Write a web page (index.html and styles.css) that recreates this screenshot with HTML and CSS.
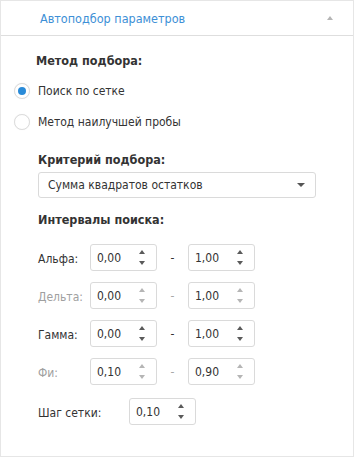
FILE: index.html
```html
<!DOCTYPE html>
<html lang="ru">
<head>
<meta charset="utf-8">
<link rel="stylesheet" href="styles.css">
</head>
<body>
<div class="panel">
  <div class="header">
    <span class="title">Автоподбор параметров</span>
    <span class="caret"></span>
  </div>
  <div class="content">
    <div class="heading h-method">Метод подбора:</div>
    <div class="radio r1 checked"><span class="circle"></span><span>Поиск по сетке</span></div>
    <div class="radio r2"><span class="circle"></span><span>Метод наилучшей пробы</span></div>

    <div class="heading h-crit">Критерий подбора:</div>
    <div class="select"><span>Сумма квадратов остатков</span><span class="sel-arrow"></span></div>

    <div class="heading h-int">Интервалы поиска:</div>

    <div class="row first">
      <span class="lbl">Альфа:</span>
      <div class="spin"><span class="val">0,00</span><span class="arrows"><i class="up"></i><i class="down"></i></span></div>
      <span class="dash">-</span>
      <div class="spin"><span class="val">1,00</span><span class="arrows"><i class="up"></i><i class="down"></i></span></div>
    </div>
    <div class="row disabled">
      <span class="lbl">Дельта:</span>
      <div class="spin"><span class="val">0,00</span><span class="arrows"><i class="up"></i><i class="down"></i></span></div>
      <span class="dash">-</span>
      <div class="spin"><span class="val">1,00</span><span class="arrows"><i class="up"></i><i class="down"></i></span></div>
    </div>
    <div class="row">
      <span class="lbl">Гамма:</span>
      <div class="spin"><span class="val">0,00</span><span class="arrows"><i class="up"></i><i class="down"></i></span></div>
      <span class="dash">-</span>
      <div class="spin"><span class="val">1,00</span><span class="arrows"><i class="up"></i><i class="down"></i></span></div>
    </div>
    <div class="row disabled">
      <span class="lbl">Фи:</span>
      <div class="spin"><span class="val">0,10</span><span class="arrows"><i class="up"></i><i class="down"></i></span></div>
      <span class="dash">-</span>
      <div class="spin"><span class="val">0,90</span><span class="arrows"><i class="up"></i><i class="down"></i></span></div>
    </div>
    <div class="row step">
      <span class="lbl step-lbl">Шаг сетки:</span>
      <div class="spin"><span class="val">0,10</span><span class="arrows"><i class="up"></i><i class="down"></i></span></div>
    </div>
  </div>
</div>
</body>
</html>
```

FILE: styles.css
```css
* { box-sizing: border-box; }
html, body { margin: 0; padding: 0; background: #fff; }
body {
  font-family: "DejaVu Sans Condensed", "DejaVu Sans", sans-serif;
  font-size: 12px;
  color: #333;
}
.panel {
  width: 354px;
  height: 457px;
  border: 1px solid #e6e6e6;
  display: flex;
  flex-direction: column;
}
.header {
  height: 35px;
  border-bottom: 1px solid #dedede;
  display: flex;
  align-items: center;
  padding-left: 39px;
  padding-right: 20px;
  flex-shrink: 0;
}
.title {
  color: #3d8fd6;
  font-size: 12.5px;
  flex: 1;
}
.caret {
  width: 0; height: 0;
  border-left: 3px solid transparent;
  border-right: 3px solid transparent;
  border-bottom: 4px solid #b5b5b5;
}
.content {
  display: flex;
  flex-direction: column;
  padding-left: 36px;
}
.heading {
  font-weight: bold;
  font-size: 12.5px;
  line-height: 16px;
  height: 16px;
}
.h-method { margin-top: 17px; margin-left: -1px; }
.radio {
  display: flex;
  align-items: center;
  height: 16px;
  line-height: 16px;
  margin-left: -23px;
  gap: 8px;
}
.r1 { margin-top: 14px; }
.r2 { margin-top: 15px; }
.circle {
  width: 16px; height: 16px;
  border-radius: 50%;
  border: 1px solid #dcdcdc;
  background: #fff;
  display: flex;
  align-items: center;
  justify-content: center;
  box-shadow: 0 0 1px rgba(0,0,0,0.08);
}
.checked .circle::after {
  content: "";
  width: 8px; height: 8px;
  border-radius: 50%;
  background: #2a8bd8;
}
.h-crit { margin-top: 22px; margin-left: 1px; }
.select {
  margin-top: 4px;
  margin-left: 1px;
  width: 278px;
  height: 26px;
  border: 1px solid #dadada;
  border-radius: 3px;
  display: flex;
  align-items: center;
  justify-content: space-between;
  padding: 0 10px 0 9px;
}
.sel-arrow {
  width: 0; height: 0;
  border-left: 4px solid transparent;
  border-right: 4px solid transparent;
  border-top: 4px solid #555;
}
.h-int { margin-top: 14px; margin-left: 1px; }
.row {
  display: flex;
  align-items: center;
  height: 27px;
  margin-top: 11px;
  margin-left: 1px;
}
.row.first { margin-top: 16px; }
.row.step { margin-top: 13px; }
.lbl {
  width: 52px;
  padding-top: 3px;
}
.step-lbl { width: 91px; }
.disabled .lbl { color: #a0a0a0; }
.spin {
  width: 67px;
  height: 27px;
  border: 1px solid #dadada;
  border-radius: 3px;
  display: flex;
  align-items: center;
  justify-content: space-between;
  padding: 0 11px 0 6px;
}
.val { color: #333; }
.arrows {
  display: flex;
  flex-direction: column;
  gap: 7px;
}
.arrows i {
  display: block;
  width: 0; height: 0;
  border-left: 3.5px solid transparent;
  border-right: 3.5px solid transparent;
}
.arrows .up { border-bottom: 4px solid #5a5a5a; }
.arrows .down { border-top: 4px solid #5a5a5a; }
.disabled .arrows .up { border-bottom-color: #b5b5b5; }
.disabled .arrows .down { border-top-color: #b5b5b5; }
.dash {
  width: 31px;
  text-align: center;
}
.disabled .dash { color: #a8a8a8; }
```
